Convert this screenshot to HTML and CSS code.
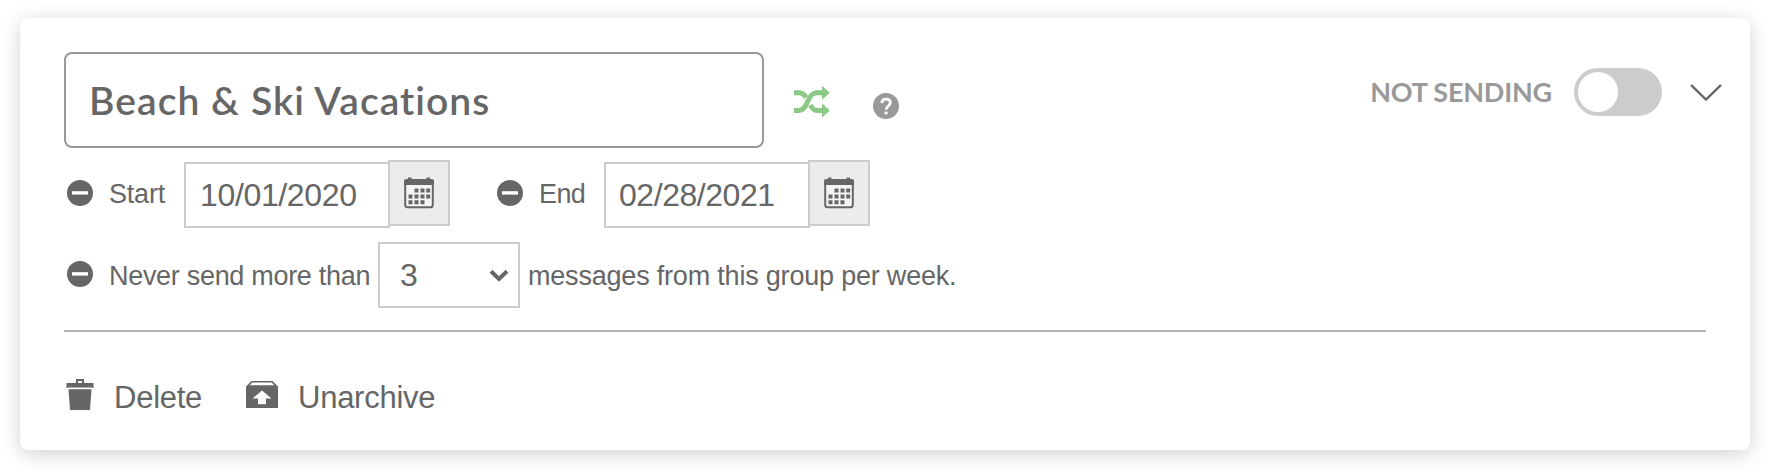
FILE: index.html
```html
<!DOCTYPE html>
<html lang="en">
<head>
  <meta charset="UTF-8">
  <title>Beach &amp; Ski Vacations</title>
  <link rel="stylesheet" href="styles.css">
</head>
<body>
  <!-- shared icons -->
  <svg class="sprite" aria-hidden="true">
    <symbol id="minus" viewBox="0 0 26 26">
      <circle cx="13" cy="13" r="13" fill="#666"/>
      <rect x="5" y="11.2" width="16" height="3.4" fill="#fff"/>
    </symbol>
    <symbol id="calendar" viewBox="0 0 30 32">
      <rect x="1.2" y="3.2" width="27.6" height="27" rx="2.5" fill="#f4f4f4" stroke="#666" stroke-width="2"/>
      <path fill="#666" d="M4 .5h3.500V2h15V.5H26V2h1.500A2.300 2.300 0 0 1 30 4.300V8H0V4.300A2.300 2.300 0 0 1 2.500 2H4z"/>
      <path fill="#666" d="M10.500 11.500h4v4h-4zM16.500 11.500h4v4h-4zM22.200 11.500h4v4h-4zM4.500 17.500h4v4h-4zM10.500 17.500h4v4h-4zM16.500 17.500h4v4h-4zM22.200 17.500h4v4h-4zM4.500 23.300h4v4h-4zM10.500 23.300h4v4h-4zM16.500 23.300h4v4h-4z"/>
    </symbol>
  </svg>

  <div class="card">
    <div class="card-head">
      <div class="title-input"><span>Beach &amp; Ski Vacations</span></div>
      <svg class="shuffle" viewBox="0 0 36 32" aria-label="Shuffle">
        <g fill="none" stroke="#8bc987" stroke-width="5">
          <path d="M0 24.600h5c4 0 6-3 8.500-8.800S18.500 6.800 22.500 6.800H29"/>
          <path d="M0 6.800h5c3 0 5.200 1.300 7 4.700M16.500 19c1.800 3.800 3.500 5.600 6.500 5.600h6"/>
        </g>
        <path fill="#8bc987" d="M28-.2l7.800 7-7.800 7zM28 17.600l7.800 7-7.800 7z"/>
      </svg>
      <svg class="help" viewBox="0 0 26 26" aria-label="Help">
        <circle cx="13" cy="13" r="13" fill="#999"/>
        <path d="M8.800 10.100c.1-2.500 1.900-3.900 4.300-3.900 2.500 0 4.200 1.400 4.200 3.500 0 3.300-4.200 3.300-4.200 7" fill="none" stroke="#fff" stroke-width="2.800"/>
        <rect x="11.600" y="18.500" width="3" height="3" rx="1" fill="#fff"/>
      </svg>

      <div class="status">
        <span class="status-text">NOT SENDING</span>
        <span class="toggle"><span class="knob"></span></span>
        <svg class="chevron" viewBox="0 0 32 17">
          <path d="M1.700 1.700L16 15.500 30.300 1.700" fill="none" stroke="#666" stroke-width="2.400" stroke-linecap="round"/>
        </svg>
      </div>
    </div>

    <div class="row dates">
      <svg class="minus"><use href="#minus"/></svg>
      <span class="label start">Start</span>
      <div class="date-field">
        <div class="date-input first">10/01/2020</div>
        <div class="date-btn"><svg><use href="#calendar"/></svg></div>
      </div>
      <svg class="minus second"><use href="#minus"/></svg>
      <span class="label end">End</span>
      <div class="date-field">
        <div class="date-input">02/28/2021</div>
        <div class="date-btn"><svg><use href="#calendar"/></svg></div>
      </div>
    </div>

    <div class="row limit">
      <svg class="minus"><use href="#minus"/></svg>
      <span class="label never">Never send more than</span>
      <div class="select">
        <span>3</span>
        <svg viewBox="0 0 20 13"><path d="M2 2.200l8 7.800 8-7.800" fill="none" stroke="#666" stroke-width="4"/></svg>
      </div>
      <span class="label">messages from this group per week.</span>
    </div>

    <div class="actions">
      <svg class="trash" viewBox="0 0 28 32">
        <path fill="#666" fill-rule="evenodd" d="M10 0h8v4h9.500v5H26V8.500H2V9H.5V4H10zM12 2v2h4V2z"/>
        <path fill="#666" d="M2.500 10.200h23L24 31H4z"/>
      </svg>
      <span class="action delete">Delete</span>
      <svg class="unarchive" viewBox="0 0 32 28">
        <path fill="#666" fill-rule="evenodd" d="M5.500 0h21L32 5.500V27H0V5.500zM6.300 1.600L3.800 4.200h24.400l-2.500-2.600zM16 9.500L6.500 17.500H12v5.700h8v-5.700h5.500z"/>
      </svg>
      <span class="action">Unarchive</span>
    </div>
  </div>
</body>
</html>
```
FILE: styles.css
```css
* {
  box-sizing: border-box;
}

body {
  margin: 0;
  padding: 18px 22px 22px 20px;
  height: 472px;
  overflow: hidden;
  background: #fff;
  color: #666;
  font-family: "Liberation Sans", Arial, sans-serif;
}

svg {
  display: block;
  flex: none;
}

.sprite {
  display: none;
}

.card {
  height: 432px;
  padding: 34px 44px 0;
  border-radius: 8px;
  background: #fff;
  box-shadow: 0 4px 20px rgba(0, 0, 0, 0.18);
}

/* Title row */
.card-head {
  display: flex;
  align-items: flex-start;
  height: 96px;
  margin-right: -16px;
}

.title-input {
  display: flex;
  align-items: center;
  width: 700px;
  height: 96px;
  padding-left: 23px;
  border: 2px solid #999;
  border-radius: 8px;
  font: 600 39px/48px Lato, sans-serif;
  letter-spacing: 1.05px;
  white-space: nowrap;
}

.shuffle {
  width: 36px;
  height: 32px;
  margin: 34px 0 0 30px;
}

.help {
  width: 26px;
  height: 26px;
  margin: 41px 0 0 43px;
}

.status {
  display: flex;
  align-items: center;
  height: 48px;
  margin: 16px 0 0 auto;
}

.status-text {
  color: #999;
  font: 700 27px/32px Lato, sans-serif;
  letter-spacing: -0.2px;
}

.toggle {
  width: 88px;
  height: 48px;
  margin: 0 28px 0 22px;
  padding: 4px;
  border-radius: 24px;
  background: #ccc;
}

.knob {
  display: block;
  width: 40px;
  height: 40px;
  border-radius: 50%;
  background: #fff;
}

.chevron {
  width: 32px;
  height: 17px;
}

/* Settings rows */
.row {
  display: flex;
  align-items: center;
  padding-left: 3px;
}

.dates {
  height: 68px;
  margin-top: 12px;
}

.limit {
  height: 66px;
  margin-top: 14px;
}

.minus {
  width: 26px;
  height: 26px;
  margin-bottom: 3px;
}

.minus.second {
  margin-left: 47px;
}

.label {
  padding-left: 16px;
  font-size: 27px;
  line-height: 32px;
  letter-spacing: -0.2px;
  white-space: nowrap;
}

.start {
  width: 91px;
}

.end {
  width: 81px;
  letter-spacing: -0.6px;
}

.never {
  width: 285px;
  letter-spacing: -0.3px;
}

.date-field {
  display: flex;
  align-items: flex-start;
}

.date-input {
  width: 206px;
  height: 66px;
  margin-top: 2px;
  padding-left: 13px;
  border: 2px solid #ccc;
  font-size: 32px;
  line-height: 63px;
  letter-spacing: -0.45px;
}

.date-input.first {
  padding-left: 14px;
  letter-spacing: -0.35px;
}

.date-btn {
  display: flex;
  align-items: center;
  justify-content: center;
  width: 62px;
  height: 66px;
  margin-left: -2px;
  border: 2px solid #ccc;
  background: #ececec;
}

.date-btn svg {
  width: 30px;
  height: 32px;
}

.select {
  display: flex;
  align-items: center;
  justify-content: space-between;
  width: 142px;
  height: 66px;
  padding: 0 9px 0 20px;
  border: 2px solid #ccc;
  font-size: 32px;
  line-height: 62px;
}

.select svg {
  width: 20px;
  height: 13px;
}

.limit .label {
  padding-top: 1px;
}

.limit .label:last-child {
  padding-left: 8px;
}

/* Footer actions */
.actions {
  display: flex;
  align-items: flex-start;
  margin-top: 22px;
  padding: 47px 0 0 2px;
  border-top: 2px solid #b3b3b3;
}

.trash {
  width: 28px;
  height: 32px;
}

.action {
  padding-top: 1px;
  padding-left: 20px;
  font-size: 31px;
  line-height: 36px;
  letter-spacing: -0.25px;
}

.delete {
  width: 152px;
}

.unarchive {
  width: 32px;
  height: 28px;
  margin-top: 2px;
}
```
